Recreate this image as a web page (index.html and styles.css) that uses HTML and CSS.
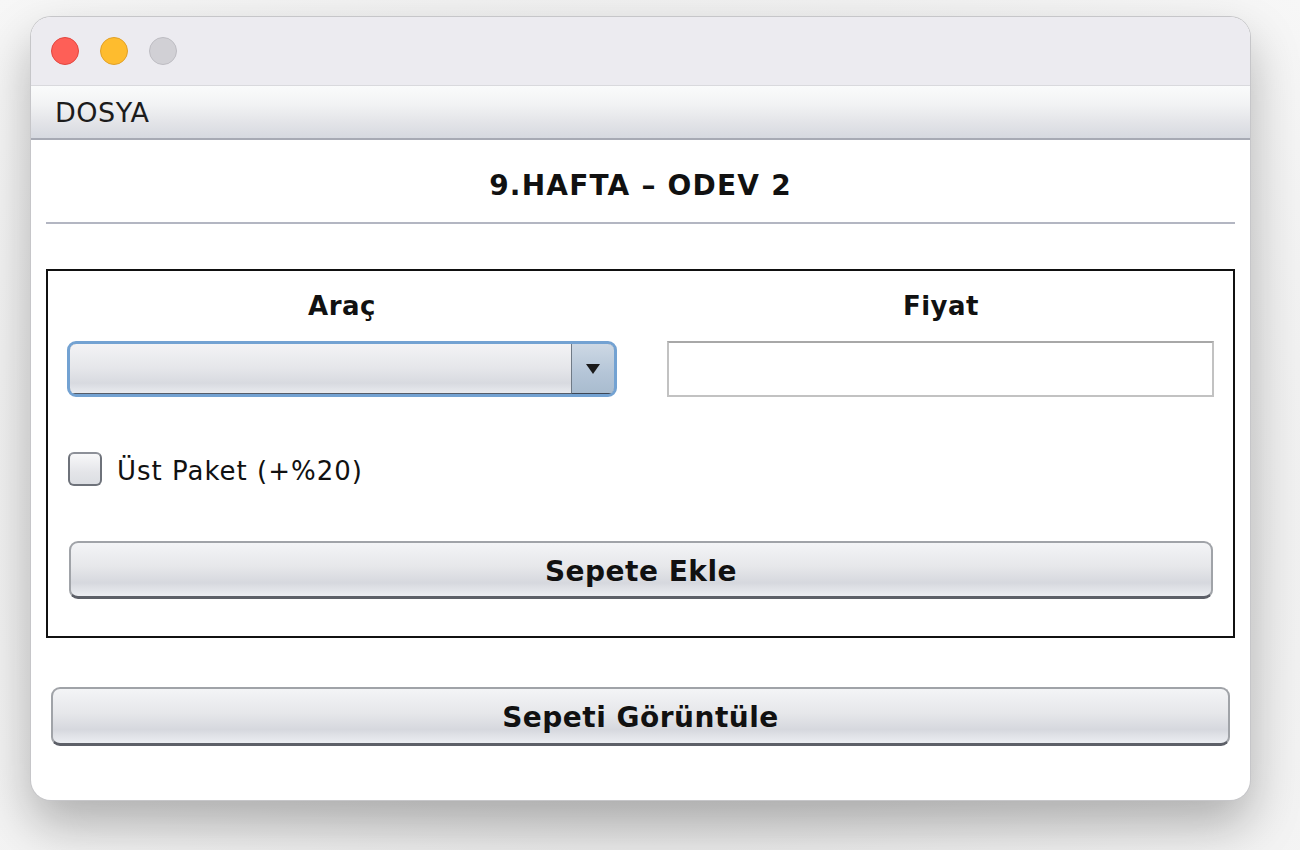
FILE: index.html
```html
<!DOCTYPE html>
<html lang="tr">
<head>
<meta charset="utf-8">
<title>9.HAFTA - ODEV 2</title>
<link rel="stylesheet" href="styles.css">
</head>
<body>
<div class="window">
  <div class="titlebar">
    <span class="light red"></span>
    <span class="light yellow"></span>
    <span class="light gray"></span>
  </div>
  <div class="menubar"><span class="menu">DOSYA</span></div>
  <div class="content">
    <h1 class="heading">9.HAFTA – ODEV 2</h1>
    <div class="separator"></div>
    <div class="panel">
      <div class="grid">
        <div class="col">
          <div class="label">Araç</div>
          <div class="combo">
            <div class="combo-body"></div>
            <div class="combo-arrow">
              <svg width="14" height="10" viewBox="0 0 14 10"><path d="M0 0 L14 0 L7 10 Z" fill="#1a1a1a"/></svg>
            </div>
          </div>
        </div>
        <div class="col">
          <div class="label">Fiyat</div>
          <div class="field"></div>
        </div>
      </div>
      <label class="check">
        <span class="box"></span>
        <span class="check-text">Üst Paket (+%20)</span>
      </label>
      <div class="button inner-btn">Sepete Ekle</div>
    </div>
    <div class="button outer-btn">Sepeti Görüntüle</div>
  </div>
</div>
</body>
</html>
```
FILE: styles.css
```css
html, body {
  margin: 0;
  padding: 0;
  width: 1300px;
  height: 850px;
  overflow: hidden;
  background: #f2f2f2;
  font-family: "DejaVu Sans", "Liberation Sans", sans-serif;
}

body {
  padding: 17px 0 0 31px;
  box-sizing: border-box;
  background: radial-gradient(ellipse at 50% 60%, #dcdcdc 0%, #eeeeee 60%, #f7f7f7 100%);
}

.window {
  width: 1219px;
  height: 783px;
  border-radius: 20px;
  overflow: hidden;
  background: #ffffff;
  box-shadow: 0 0 0 1px #c6c6c9, 0 24px 50px rgba(0,0,0,0.28);
  display: flex;
  flex-direction: column;
}

.titlebar {
  height: 69px;
  background: #ecebf0;
  border-bottom: 1px solid #d9d9dd;
  display: flex;
  align-items: center;
  gap: 21px;
  padding: 0 0 0 20px;
  box-sizing: border-box;
  flex-shrink: 0;
}

.light {
  width: 28px;
  height: 28px;
  border-radius: 50%;
  box-sizing: border-box;
}
.light.red { background: #fe5f57; border: 1px solid #e2463f; }
.light.yellow { background: #febc2e; border: 1px solid #e0a028; }
.light.gray { background: #d1d0d5; border: 1px solid #bdbcc2; }

.menubar {
  height: 54px;
  background: linear-gradient(#fafbfb 0%, #f2f3f4 35%, #e3e4e8 70%, #d6d9e0 100%);
  border-bottom: 2px solid #a7aab4;
  display: flex;
  align-items: center;
  padding-left: 24px;
  box-sizing: border-box;
  flex-shrink: 0;
}

.menu {
  font-size: 27px;
  color: #1c1c1c;
  letter-spacing: 0.5px;
}

.content {
  flex: 1;
  padding: 0 15px;
  display: flex;
  flex-direction: column;
}

.heading {
  margin: 0;
  height: 82px;
  line-height: 92px;
  text-align: center;
  font-size: 28px;
  font-weight: bold;
  color: #111;
  letter-spacing: 1.2px;
}

.separator {
  height: 2px;
  background: #b3b6c2;
}

.panel {
  margin-top: 45px;
  border: 2px solid #111;
  height: 369px;
  box-sizing: border-box;
  padding: 16px 20px 0 19px;
  display: flex;
  flex-direction: column;
}

.grid {
  display: grid;
  grid-template-columns: 550px 546px;
  column-gap: 51px;
}

.label {
  text-align: center;
  font-size: 26px;
  font-weight: bold;
  color: #111;
  height: 38px;
  line-height: 38px;
  letter-spacing: 0.5px;
}

.col .label { margin-bottom: 16px; }

.combo {
  height: 56px;
  border-radius: 9px;
  border: 3px solid #73a2d2;
  box-sizing: border-box;
  display: flex;
  overflow: hidden;
  box-shadow: inset 0 0 0 1px #4d5a6b;
}

.combo-body {
  flex: 1;
  background: linear-gradient(#f3f3f5 0%, #e5e6ea 50%, #d8dae0 80%, #e9ebef 100%);
  border-bottom: 1px solid #555c68;
}

.combo-arrow {
  width: 42px;
  background: linear-gradient(#cdd8e4 0%, #b4c5d7 60%, #a9bccf 100%);
  border-left: 1px solid #6f7a86;
  border-bottom: 1px solid #3d4654;
  display: flex;
  align-items: center;
  justify-content: center;
}

.field {
  height: 56px;
  margin-left: -1px;
  border: 2px solid #c2c2c2;
  border-top-color: #a8a8a8;
  box-sizing: border-box;
  background: #fff;
}

.check {
  display: flex;
  align-items: center;
  gap: 15px;
  margin-top: 54px;
  height: 36px;
}

.box {
  width: 34px;
  height: 34px;
  box-sizing: border-box;
  border-radius: 6px;
  border: 2px solid #6e727a;
  border-top-color: #8d9098;
  background: linear-gradient(#f8f8f9 0%, #e4e5e9 60%, #dcdee3 100%);
  margin-left: 1px;
}

.check-text {
  font-size: 26px;
  color: #111;
  letter-spacing: 1px;
  padding-top: 3px;
}

.button {
  height: 58px;
  border-radius: 9px;
  box-sizing: border-box;
  border: 2px solid #a0a3a8;
  border-bottom-color: #5d6068;
  border-bottom-width: 3px;
  background: linear-gradient(#f3f4f6 0%, #e6e7ea 45%, #d6d8de 75%, #eceef2 100%);
  display: flex;
  align-items: center;
  justify-content: center;
  font-size: 28px;
  font-weight: bold;
  color: #111;
  letter-spacing: 0.5px;
  padding-top: 3px;
}

.inner-btn {
  margin-top: 54px;
  margin-left: 2px;
}

.outer-btn {
  margin-top: 49px;
  margin-left: 5px;
  margin-right: 5px;
  height: 59px;
}
```
